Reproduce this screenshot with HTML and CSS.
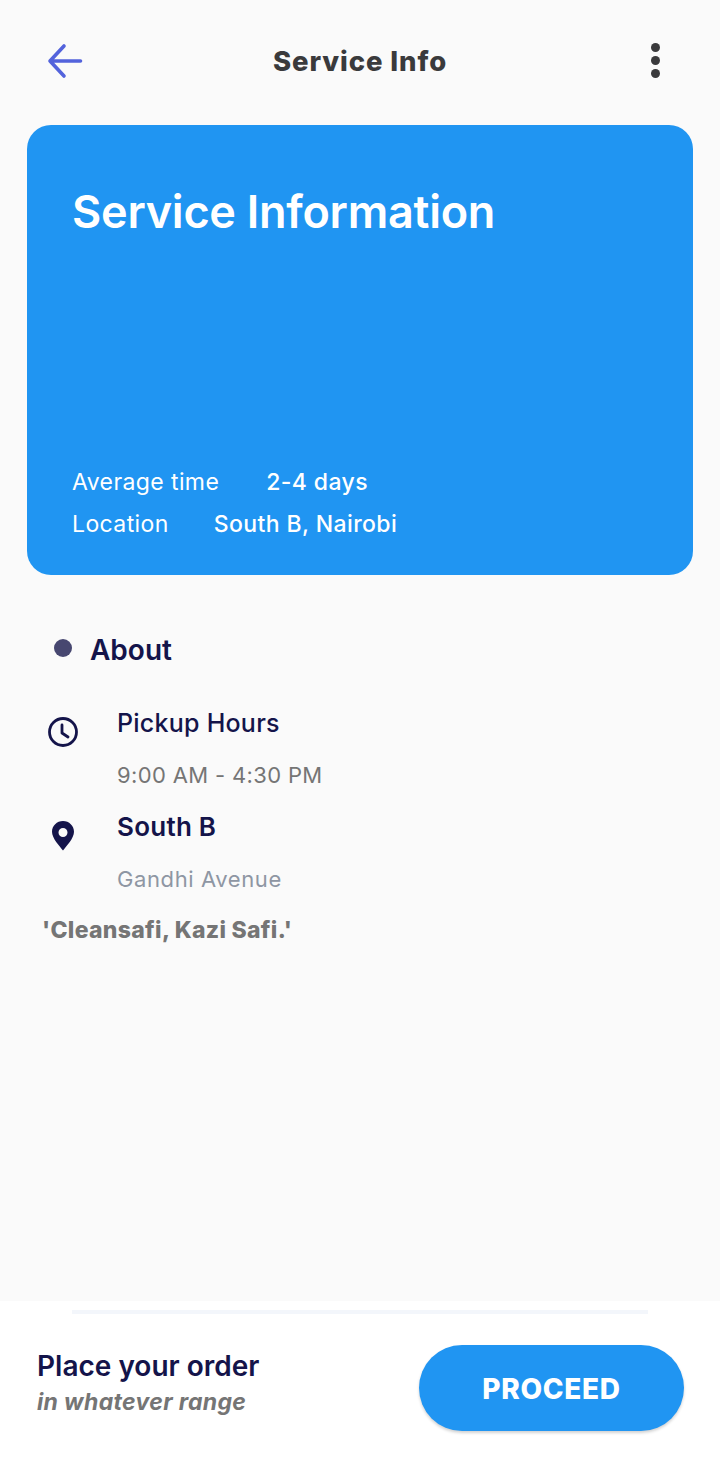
FILE: index.html
```html
<!DOCTYPE html>
<html lang="en">
<head>
<meta charset="utf-8">
<title>Service Info</title>
<link rel="stylesheet" href="styles.css">
</head>
<body>
<div class="page">
  <header class="topbar">
    <svg class="back" width="36" height="36" viewBox="0 0 36 36" fill="none" stroke="#5363dc" stroke-width="3.600" stroke-linecap="round" stroke-linejoin="round"><path d="M33.500 18H3M17 3l-14 15 14 15"/></svg>
    <h1 class="topbar-title">Service Info</h1>
    <div class="dots"><span></span><span></span><span></span></div>
  </header>
  <section class="card">
    <h2 class="card-title">Service Information</h2>
    <div class="card-meta">
      <div class="meta-row meta-row-time"><span class="meta-label">Average time</span><span class="meta-value">2-4 days</span></div>
      <div class="meta-row meta-row-loc"><span class="meta-label">Location</span><span class="meta-value">South B, Nairobi</span></div>
    </div>
  </section>
  <main class="about">
    <div class="about-head"><span class="bullet"></span><h3 class="about-title">About</h3></div>
    <div class="info info-first">
      <svg class="info-icon" width="32" height="32" viewBox="0 0 32 32" fill="none" stroke="#14144a" stroke-width="2.800" stroke-linecap="round" stroke-linejoin="round"><circle cx="16" cy="16" r="13.500"/><path d="M15 9v8l6 4"/></svg>
      <div class="info-text"><div class="info-title">Pickup Hours</div><div class="info-sub">9:00 AM - 4:30 PM</div></div>
    </div>
    <div class="info info-second">
      <svg class="info-icon" width="32" height="32" viewBox="0 0 32 32"><path fill="#14144a" fill-rule="evenodd" d="M16 1C9.900 1 5 5.800 5 11.800 5 18.500 12.500 26 16 30.500 19.500 26 27 18.500 27 11.800 27 5.800 22.100 1 16 1Zm0 7a4.500 4.500 0 1 1 0 9 4.500 4.500 0 0 1 0-9Z"/></svg>
      <div class="info-text"><div class="info-title info-title-bold">South B</div><div class="info-sub info-sub-light">Gandhi Avenue</div></div>
    </div>
    <p class="slogan">'Cleansafi, Kazi Safi.'</p>
  </main>
  <footer class="footer">
    <div class="footer-line"></div>
    <div class="footer-row">
      <div class="footer-text"><div class="footer-title">Place your order</div><div class="footer-sub">in whatever range</div></div>
      <button class="proceed" type="button">PROCEED</button>
    </div>
  </footer>
</div>
</body>
</html>
```
FILE: styles.css
```css
* { box-sizing: border-box; }
html, body { margin: 0; padding: 0; }
body { background: #fafafa; font-family: Inter, "Liberation Sans", sans-serif; }
.page { width: 720px; height: 1467px; display: flex; flex-direction: column; overflow: hidden; }
.topbar { height: 125px; flex: none; display: flex; align-items: center; padding: 0 47px 3px; }
.back { display: block; flex: none; }
.topbar-title { flex: 1; margin: 0; text-align: center; font-size: 27.500px; font-weight: 800; color: #3a3a3c; letter-spacing: .9px; }
.dots { flex: none; display: flex; flex-direction: column; align-items: center; gap: 4px; width: 36px; margin-top: -2px; }
.dots span { width: 9px; height: 9px; border-radius: 50%; background: #3a3a3c; }
.card { flex: none; height: 450px; margin: 0 27px; border-radius: 24px; background: #2095f2; color: #fff; padding: 59px 45px 36px; display: flex; flex-direction: column; justify-content: space-between; }
.card-title { margin: 0; font-size: 45px; line-height: 56px; font-weight: 600; letter-spacing: -.25px; }
.card-meta { display: flex; flex-direction: column; gap: 12px; }
.meta-row { display: flex; font-size: 23px; line-height: 30px; letter-spacing: .4px; }
.meta-row-time { gap: 47px; }
.meta-row-loc { gap: 45px; }
.meta-label { font-weight: 400; }
.meta-value { font-weight: 500; }
.about { flex: 1; padding: 58px 0 0 42px; }
.about-head { display: flex; align-items: center; gap: 18px; padding-left: 12px; }
.bullet { width: 18px; height: 18px; border-radius: 50%; background: #474770; margin-top: -4px; }
.about-title { margin: 0; font-size: 28px; line-height: 34px; font-weight: 600; color: #14144a; }
.info { display: flex; gap: 38px; padding-left: 5px; }
.info-first { margin-top: 17px; }
.info-second { margin-top: -1px; }
.info-icon { flex: none; margin-top: 32px; }
.info-text { padding-top: 24px; }
.info-title { font-size: 25px; line-height: 30px; font-weight: 500; color: #14144a; letter-spacing: .25px; }
.info-title-bold { font-size: 26px; font-weight: 600; }
.info-sub { margin-top: 23px; font-size: 22px; line-height: 28px; color: #757575; letter-spacing: .35px; }
.info-sub-light { color: #8e96a3; letter-spacing: .6px; }
.slogan { margin: 23px 0 0; font-size: 23px; line-height: 28px; font-weight: 800; color: #757575; letter-spacing: .3px; }
.footer { flex: none; height: 166px; background: #fff; padding-top: 9px; }
.footer-line { height: 4px; margin: 0 72px; background: #f3f6fb; }
.footer-row { display: flex; justify-content: space-between; align-items: flex-start; padding: 31px 36px 0 37px; }
.footer-text { padding-top: 4px; }
.footer-title { font-size: 28px; line-height: 34px; font-weight: 600; color: #14144a; }
.footer-sub { margin-top: 4px; font-size: 23px; line-height: 30px; font-style: italic; font-weight: 700; color: #757575; letter-spacing: .35px; }
.proceed { width: 265px; height: 86px; border: 0; border-radius: 43px; padding: 2px 0 0; background: #2095f2; color: #fff; font: 800 28px Inter, "Liberation Sans", sans-serif; letter-spacing: .7px; box-shadow: 0 2px 3px rgba(0,0,0,.18); }
```
